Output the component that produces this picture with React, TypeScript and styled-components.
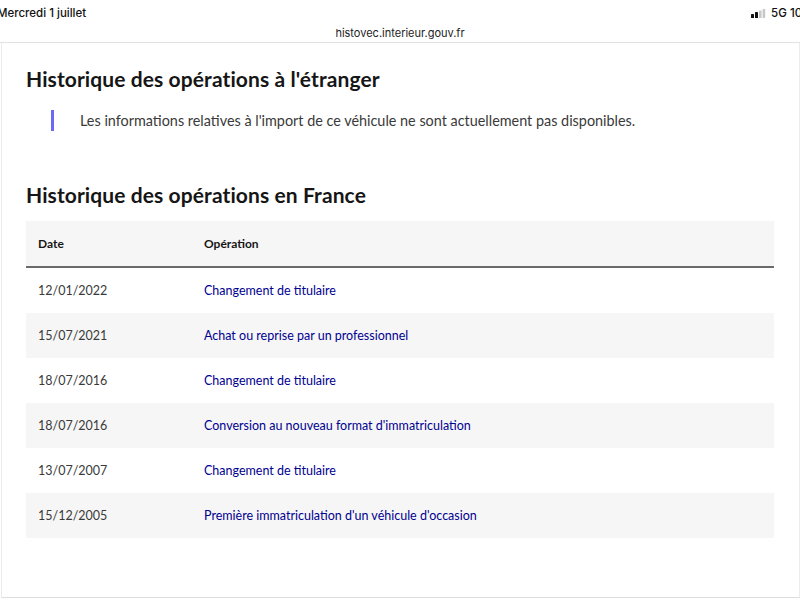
import React from "react";
import styled, { createGlobalStyle } from "styled-components";

const Global = createGlobalStyle`
  html, body { margin: 0; padding: 0; background: #ffffff; }
  body { width: 800px; height: 600px; overflow: hidden; font-family: "Lato", "Noto Sans", sans-serif; }
`;

const Screen = styled.div`
  width: 800px;
  height: 600px;
  display: flex;
  flex-direction: column;
  background: #fff;
  overflow: hidden;
`;

const StatusBar = styled.div`
  height: 22px;
  display: flex;
  align-items: center;
  justify-content: space-between;
  font-family: "Inter", "Liberation Sans", sans-serif;
  font-size: 11.5px;
  font-weight: 500;
  color: #111;
  overflow: hidden;
  padding-top: 2px;
`;

const DateText = styled.span`
  margin-left: -3px;
  white-space: nowrap;
`;

const Right = styled.div`
  display: flex;
  align-items: center;
  gap: 5px;
  white-space: nowrap;
  margin-right: -24px;
`;

const UrlBar = styled.div`
  height: 18px;
  display: flex;
  align-items: center;
  justify-content: center;
  font-family: "Inter", "Liberation Sans", sans-serif;
  font-size: 11px;
  color: #222;
  border-bottom: 1px solid #e2e2e2;
`;

const Frame = styled.div`
  flex: 1;
  margin: 0 0 2px 1px;
  border-left: 1px solid #ececec;
  border-right: 1px solid #ececec;
  border-bottom: 1px solid #dddddd;
  padding: 23px 25px 0 24px;
  display: flex;
  flex-direction: column;
`;

const Heading = styled.h2`
  margin: 0;
  font-size: 21px;
  line-height: 26px;
  font-weight: 700;
  color: #161616;
  letter-spacing: 0.1px;
`;

const Callout = styled.div`
  margin: 17px 0 0 25px;
  display: flex;
  align-items: center;
  gap: 26px;
  height: 22px;
`;

const Bar = styled.span`
  width: 3px;
  height: 21px;
  background: #6a6af4;
`;

const CalloutText = styled.p`
  margin: 0;
  font-size: 14.4px;
  color: #3a3a3a;
`;

const SecondHeading = styled(Heading)`
  margin-top: 51px;
`;

const Table = styled.div`
  margin-top: 13px;
  display: flex;
  flex-direction: column;
`;

const HeaderRow = styled.div`
  height: 45px;
  display: grid;
  grid-template-columns: 166px 1fr;
  align-items: center;
  background: #f6f6f6;
  border-bottom: 2px solid #6a6a6a;
  padding-left: 12px;
  font-size: 12px;
  font-weight: 700;
  color: #161616;
`;

const Row = styled.div<{ $alt: boolean }>`
  height: 45px;
  display: grid;
  grid-template-columns: 166px 1fr;
  align-items: center;
  background: ${(p) => (p.$alt ? "#f6f6f6" : "#ffffff")};
  padding-left: 12px;
  font-size: 12.5px;
`;

const DateCell = styled.span`
  color: #3a3a3a;
`;

const OpCell = styled.span`
  color: #000091;
`;

const rows: [string, string][] = [
  ["12/01/2022", "Changement de titulaire"],
  ["15/07/2021", "Achat ou reprise par un professionnel"],
  ["18/07/2016", "Changement de titulaire"],
  ["18/07/2016", "Conversion au nouveau format d'immatriculation"],
  ["13/07/2007", "Changement de titulaire"],
  ["15/12/2005", "Première immatriculation d'un véhicule d'occasion"],
];

const Signal = () => (
  <svg width="15" height="9" viewBox="0 0 15 9">
    <rect x="0" y="5" width="3" height="4" rx="0.6" fill="#111" />
    <rect x="4" y="3" width="3" height="6" rx="0.6" fill="#111" />
    <rect x="8" y="1.5" width="2.6" height="7.5" rx="0.6" fill="#c8c8c8" />
    <rect x="11.6" y="0" width="2.6" height="9" rx="0.6" fill="#c8c8c8" />
  </svg>
);

export default function App() {
  return (
    <Screen>
      <Global />
      <StatusBar>
        <DateText>Mercredi 1 juillet</DateText>
        <Right>
          <Signal />
          <span>5G 100 %</span>
        </Right>
      </StatusBar>
      <UrlBar>histovec.interieur.gouv.fr</UrlBar>
      <Frame>
        <Heading>Historique des opérations à l'étranger</Heading>
        <Callout>
          <Bar />
          <CalloutText>
            Les informations relatives à l'import de ce véhicule ne sont actuellement pas disponibles.
          </CalloutText>
        </Callout>
        <SecondHeading>Historique des opérations en France</SecondHeading>
        <Table>
          <HeaderRow>
            <span>Date</span>
            <span>Opération</span>
          </HeaderRow>
          {rows.map(([d, op], i) => (
            <Row key={i} $alt={i % 2 === 1}>
              <DateCell>{d}</DateCell>
              <OpCell>{op}</OpCell>
            </Row>
          ))}
        </Table>
      </Frame>
    </Screen>
  );
}
